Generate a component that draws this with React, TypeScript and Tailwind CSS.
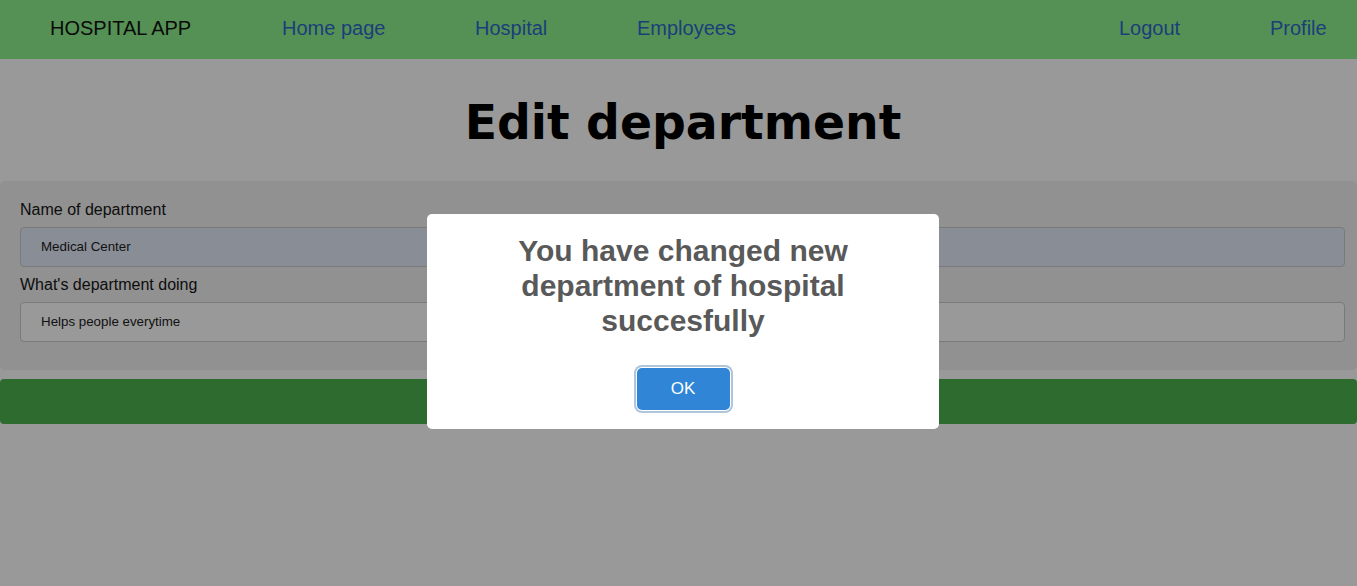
import React from "react";

export default function App() {
  const font = { fontFamily: '"Liberation Sans", Arial, sans-serif' };
  return (
    <div className="relative min-h-[586px] w-full bg-[#999999] overflow-hidden" style={font}>
      <nav className="flex h-[59px] items-center bg-[#559155] pl-[50px] pb-[3px] text-[20px]">
        <span className="w-[232px] text-[#0a0a0a]">HOSPITAL APP</span>
        <a className="w-[193px] text-[#1b3e7a]">Home page</a>
        <a className="w-[162px] text-[#1b3e7a]">Hospital</a>
        <a className="text-[#1b3e7a]">Employees</a>
        <div className="ml-auto flex">
          <a className="w-[151px] text-[#1b3e7a]">Logout</a>
          <a className="w-[87px] text-[#1b3e7a]">Profile</a>
        </div>
      </nav>

      <h1
        className="mt-[36px] mb-[30px] pl-[9px] text-center text-[47.3px] font-bold leading-[56px] text-black"
        style={{ fontFamily: '"DejaVu Sans", Verdana, sans-serif' }}
      >
        Edit department
      </h1>

      <div className="rounded-[5px] bg-[#919191] pt-[20px] pb-[28px] pl-[20px] pr-[12px]">
        <label className="mb-[8px] block text-[16px] leading-[18px] text-[#0d0d0d]">Name of department</label>
        <div className="flex h-[40px] items-center rounded-[4px] border border-[#7a7a7a] bg-[#898d96] pl-[20px] text-[13.33px] text-[#111]">
          Medical Center
        </div>
        <label className="mt-[9px] mb-[8px] block text-[16px] leading-[18px] text-[#0d0d0d]">What's department doing</label>
        <div className="flex h-[40px] items-center rounded-[4px] border border-[#7a7a7a] bg-[#999999] pl-[20px] text-[13.33px] text-[#111]">
          Helps people everytime
        </div>
      </div>

      <div className="mt-[9px] h-[45px] rounded-[4px] bg-[#2e6b2e]" />

      <div className="absolute left-[427px] top-[214px] flex w-[512px] flex-col items-center rounded-[5px] bg-white pt-[19px] pb-[19px]">
        <h2 className="px-[30px] text-center text-[30px] font-bold leading-[35px] text-[#595959]">
          You have changed new department of hospital succesfully
        </h2>
        <button className="mt-[30px] h-[42px] w-[93px] rounded-[5px] bg-[#3085d6] text-[17px] text-white shadow-[0_0_0_1px_#ffffff,0_0_0_3px_#afc5db]">
          OK
        </button>
      </div>
    </div>
  );
}
